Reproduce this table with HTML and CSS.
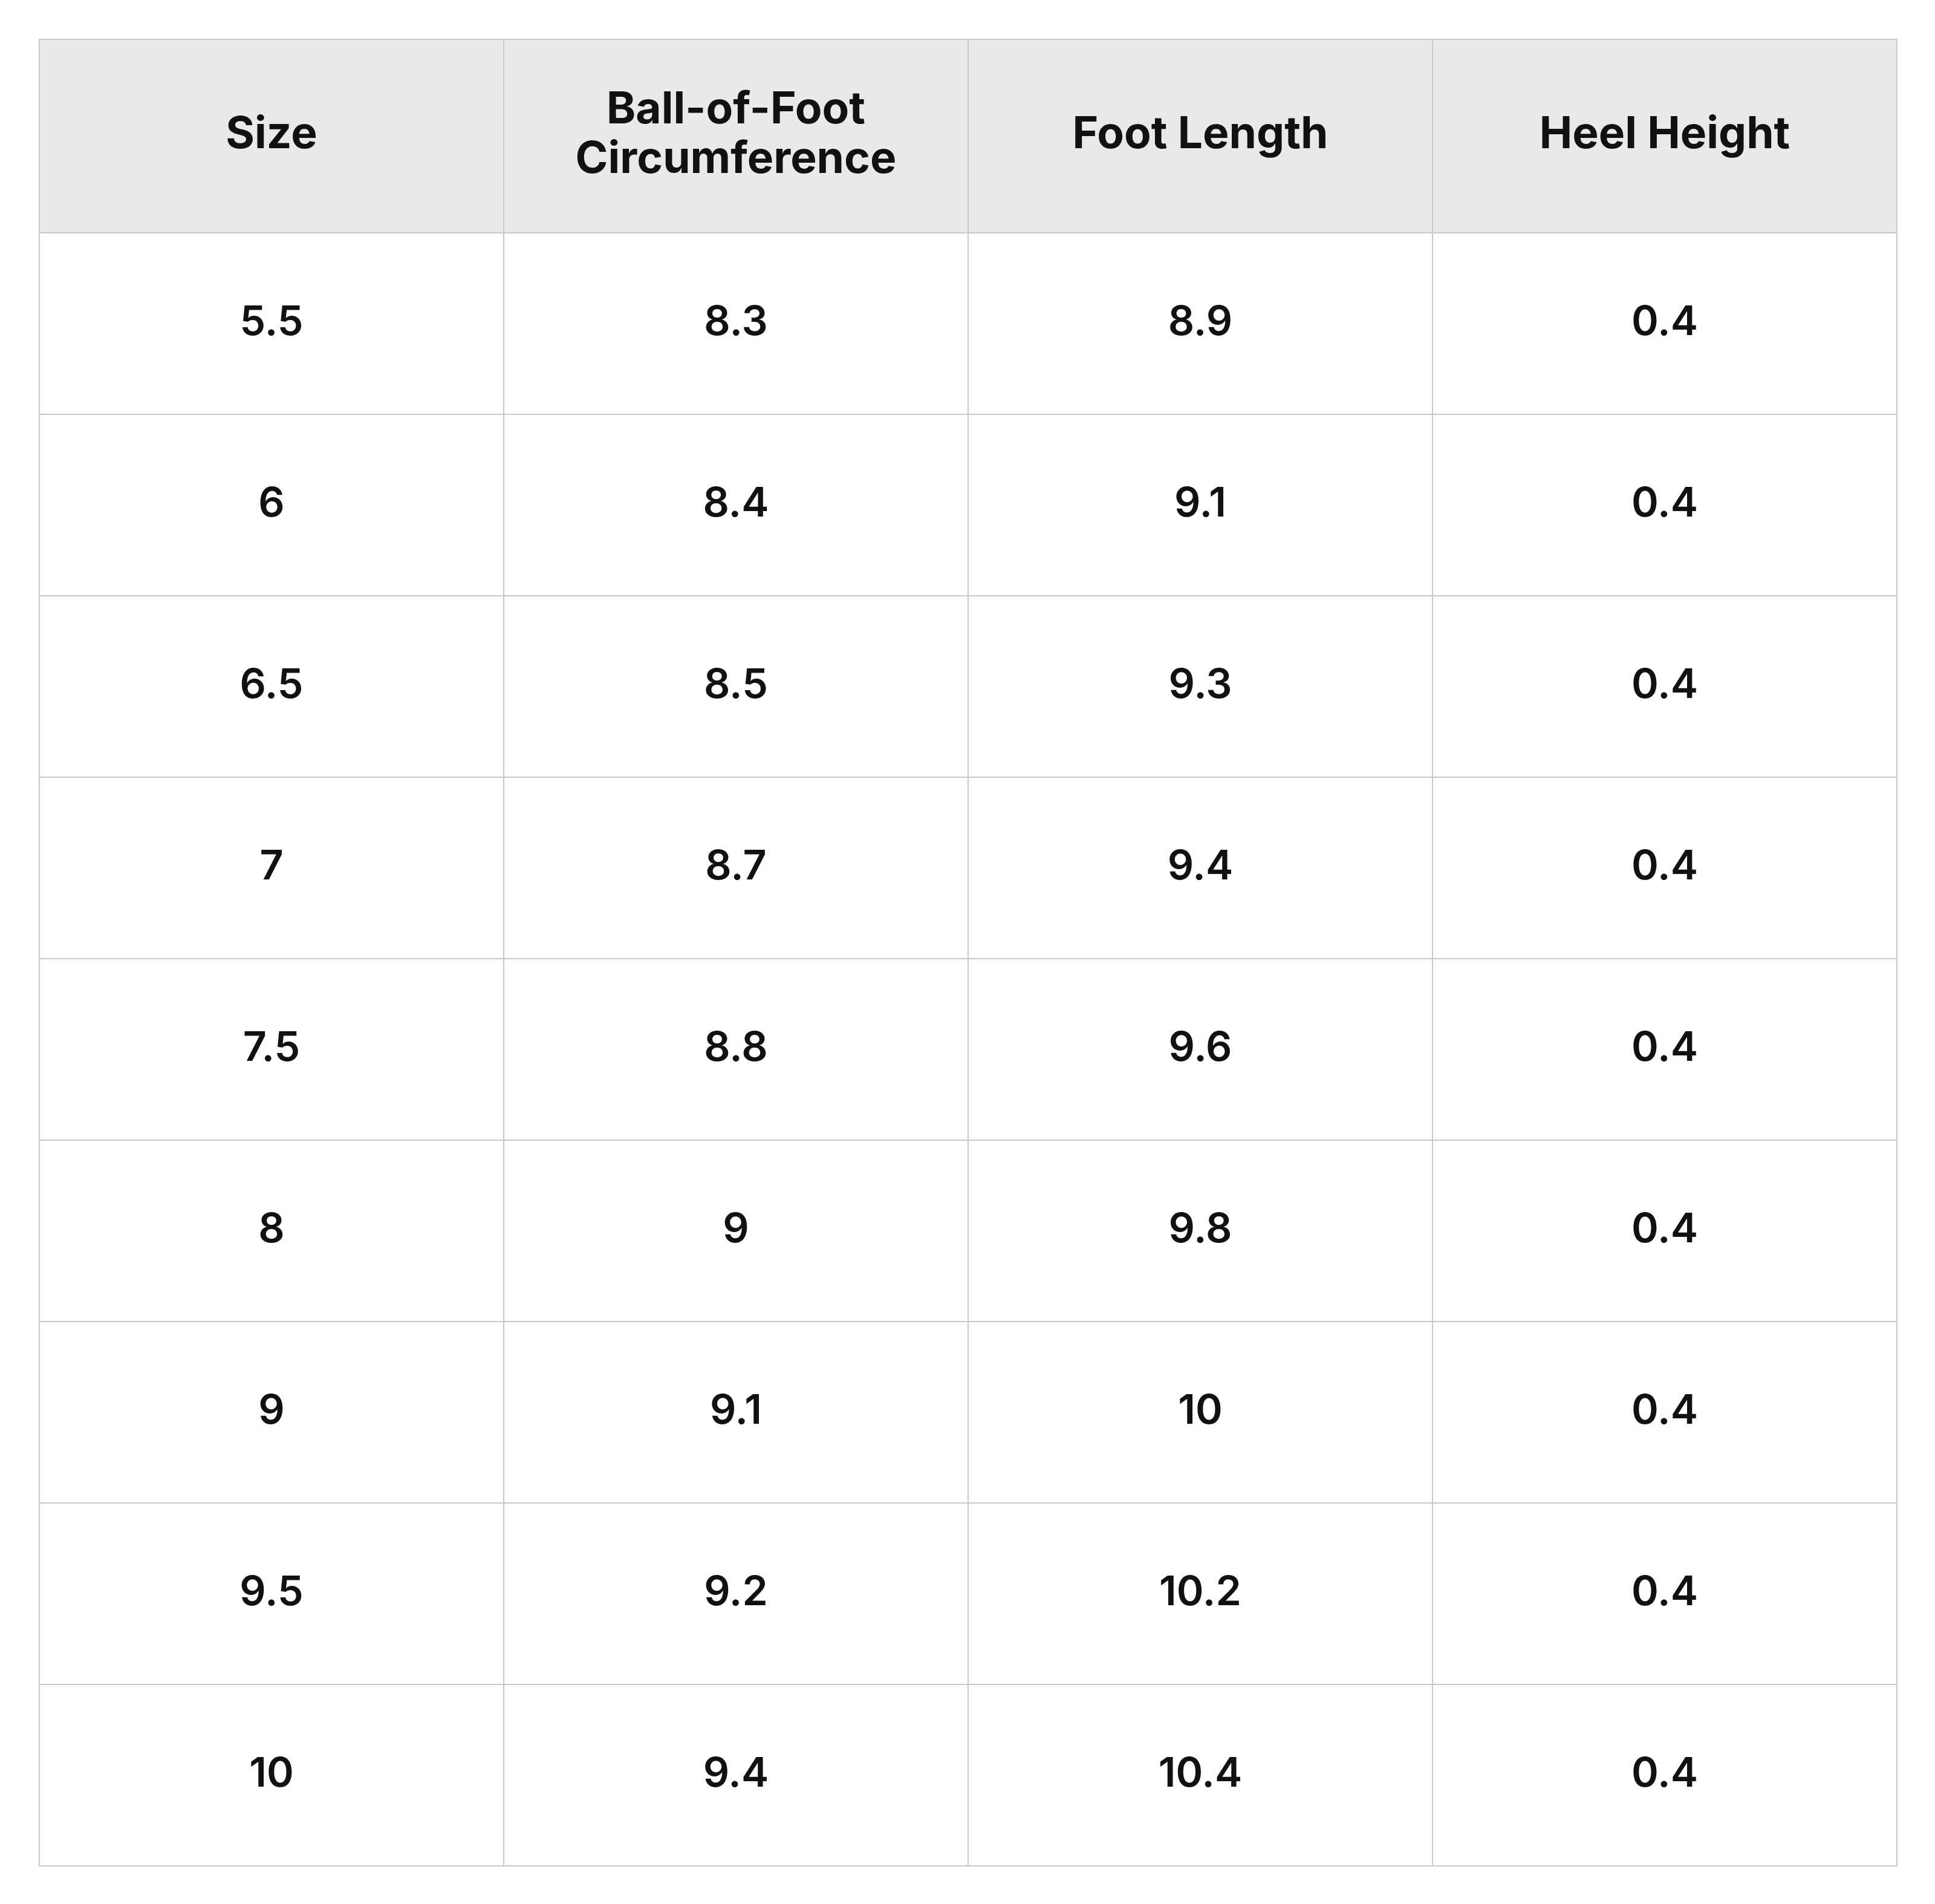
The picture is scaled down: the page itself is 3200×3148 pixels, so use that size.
FILE: index.html
```html
<!DOCTYPE html>
<html>
<head>
<meta charset="utf-8">
<link rel="stylesheet" href="styles.css">
</head>
<body>
<table class="size-table">
  <thead>
    <tr><th>Size</th><th>Ball-of-Foot<br>Circumference</th><th>Foot Length</th><th>Heel Height</th></tr>
  </thead>
  <tbody>
    <tr><td>5.5</td><td>8.3</td><td>8.9</td><td>0.4</td></tr>
    <tr><td>6</td><td>8.4</td><td>9.1</td><td>0.4</td></tr>
    <tr><td>6.5</td><td>8.5</td><td>9.3</td><td>0.4</td></tr>
    <tr><td>7</td><td>8.7</td><td>9.4</td><td>0.4</td></tr>
    <tr><td>7.5</td><td>8.8</td><td>9.6</td><td>0.4</td></tr>
    <tr><td>8</td><td>9</td><td>9.8</td><td>0.4</td></tr>
    <tr><td>9</td><td>9.1</td><td>10</td><td>0.4</td></tr>
    <tr><td>9.5</td><td>9.2</td><td>10.2</td><td>0.4</td></tr>
    <tr><td>10</td><td>9.4</td><td>10.4</td><td>0.4</td></tr>
  </tbody>
</table>
</body>
</html>
```
FILE: styles.css
```css
html, body {
  margin: 0;
  background: #ffffff;
}
body {
  padding: 64px;
  font-family: Inter, "Noto Sans", sans-serif;
  color: #111111;
}
.size-table {
  width: 3074px;
  border-collapse: collapse;
  table-layout: fixed;
}
.size-table th,
.size-table td {
  border: 2px solid #c9c9c9;
  text-align: center;
  vertical-align: middle;
  font-size: 68px;
  line-height: 85px;
  font-weight: 600;
  padding: 0 20px 12px;
}
.size-table th {
  background: #e9e9e9;
  height: 306px;
  font-size: 73px;
  line-height: 82px;
  font-weight: 700;
}
.size-table td {
  height: 286px;
}
```
